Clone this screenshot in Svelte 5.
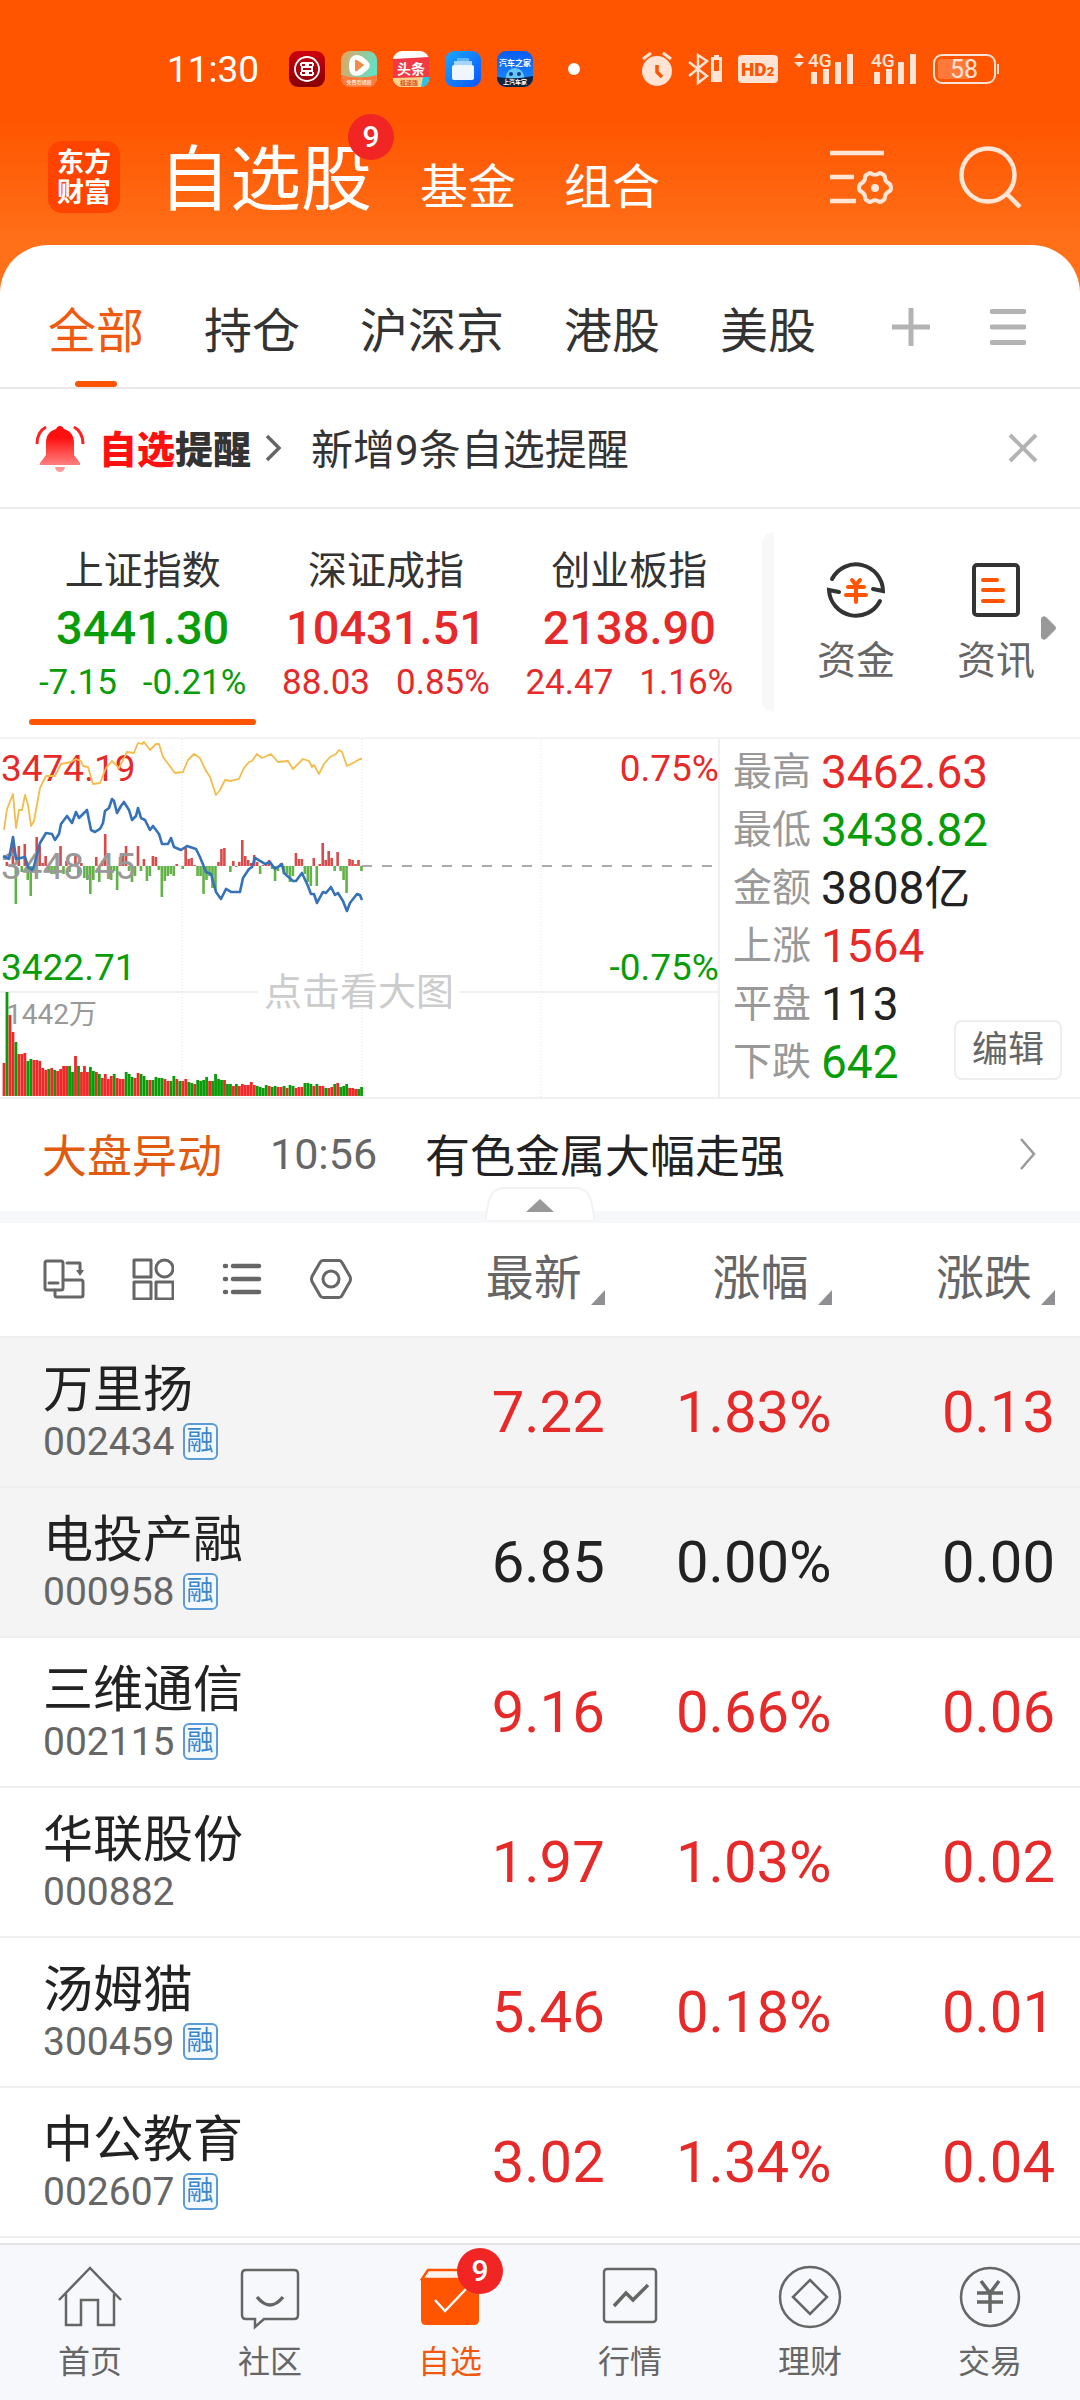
<script>
	let activeTab = $state('全部');
	let activeIndex = $state(0);
	let showAlert = $state(true);
	let showMarket = $state(true);

	const tabs = ['全部', '持仓', '沪深京', '港股', '美股'];

	const indexes = [
		{ name: '上证指数', value: '3441.30', diff: '-7.15', pct: '-0.21%', dir: 'down' },
		{ name: '深证成指', value: '10431.51', diff: '88.03', pct: '0.85%', dir: 'up' },
		{ name: '创业板指', value: '2138.90', diff: '24.47', pct: '1.16%', dir: 'up' }
	];

	const stats = [
		{ label: '最高', value: '3462.63', dir: 'up' },
		{ label: '最低', value: '3438.82', dir: 'down' },
		{ label: '金额', value: '3808亿', dir: 'flat' },
		{ label: '上涨', value: '1564', dir: 'up' },
		{ label: '平盘', value: '113', dir: 'flat' },
		{ label: '下跌', value: '642', dir: 'down' }
	];

	const stocks = [
		{ name: '万里扬', code: '002434', margin: true, price: '7.22', pct: '1.83%', diff: '0.13', dir: 'up', top: true },
		{ name: '电投产融', code: '000958', margin: true, price: '6.85', pct: '0.00%', diff: '0.00', dir: 'flat', top: true },
		{ name: '三维通信', code: '002115', margin: true, price: '9.16', pct: '0.66%', diff: '0.06', dir: 'up' },
		{ name: '华联股份', code: '000882', margin: false, price: '1.97', pct: '1.03%', diff: '0.02', dir: 'up' },
		{ name: '汤姆猫', code: '300459', margin: true, price: '5.46', pct: '0.18%', diff: '0.01', dir: 'up' },
		{ name: '中公教育', code: '002607', margin: true, price: '3.02', pct: '1.34%', diff: '0.04', dir: 'up' }
	];

	const columns = ['最新', '涨幅', '涨跌'];

	// one entry per minute, negative = green
	const volume = [
		33, -104, 81, 64, -54, 42, 42, 43, -35, -37, 36, 36, 35, 28, 26, -27, 28, -26, 25, 27, 30, 30, -30, -24, 40,
		-30, 24, 30, 24, -29, -25, 24, -22, 18, 22, 17, 20, -22, 18, 17, 17, -24, -22, -19, 18, 23, -22, -20, -16, 16,
		-16, -19, -18, -18, 17, 15, -15, -20, 17, -15, 15, 17, -14, -13, 12, -16, -15, -16, -19, 15, -15, -22, -17,
		-16, 16, -12, -12, 10, -12, 10, 12, 11, 11, 14, 11, -10, -9, -8, -11, 10, -9, -10, 9, 9, -10, 8, -11, -10, 8,
		9, 9, -13, -13, -12, 10, -12, 10, 10, -8, 8, 9, -12, 13, -9, -10, -12, 8, 8, 7, -7, -9
	];
	const momentum = [
		0, 4, 0, 20, -38, 20, -6, 22, -14, -30, -5, 29, 20, 3, 10, -4, -8, -8, -6, 20, -8, 5, -6, 2, 11, -10, 3, -12,
		-14, -28, -14, 9, -16, 5, 32, -6, -14, -5, -24, 9, 10, 20, -5, -16, -10, 20, -5, 7, -15, -10, 10, 9, -4, -31,
		-15, -10, -8, -10, 2, 0, -3, 19, 7, 8, 1, -10, -10, -28, -14, -10, -22, -24, 4, 17, 18, 0, -6, 5, -1, 4, 26,
		10, 6, 3, 11, 4, -8, 1, 2, 6, -3, -15, -5, 3, -8, -8, -16, -10, 13, 7, 7, -8, -16, -20, 8, -20, 2, 23, 6, 15,
		8, -5, 14, -5, -14, -27, 7, 6, 2, 6, -5
	];
	const leadLine =
		'4,91 7,70 13,55 16,89 19,71 22,71 25,56 28,66 31,87 34,82 40,49 46,37 55,37 61,25 71,23 76,20 81,22 83,27 88,28 93,45 100,44 106,29 112,22 119,29 127,13 134,14 138,4 142,5 144,3 150,11 156,5 159,5 163,18 169,26 175,34 183,33 188,21 194,15 200,19 205,30 210,38 216,56 220,51 225,41 231,42 239,40 244,29 249,23 252,22 257,15 262,19 271,15 278,23 288,22 293,30 303,20 309,22 312,28 314,26 319,35 324,25 330,18 336,15 339,11 342,13 347,27 353,24 360,20 362,20';
	const priceLine =
		'3,117 9,120 13,98 16,120 25,118 28,128 32,131 34,127 40,104 46,94 52,95 55,101 59,95 61,85 67,77 72,84 76,73 79,79 87,71 91,91 95,93 100,90 103,84 105,72 109,69 112,60 114,62 117,74 121,67 124,63 129,71 132,81 136,77 138,69 141,79 145,81 150,91 153,87 159,95 162,105 168,105 171,99 174,108 181,111 187,107 196,110 200,118 206,133 211,135 216,153 221,160 226,150 231,153 240,153 243,139 249,130 252,128 255,119 265,125 270,123 275,130 282,125 284,134 293,142 296,142 302,134 308,147 311,155 314,155 317,164 323,153 326,154 331,148 335,156 338,154 343,162 347,172 350,164 357,155 360,156 362,161';

	function barX(i) {
		return 2.6 + i * 2.98;
	}
</script>

{#snippet signal()}
	<text x="0" y="15" class="net">4G</text>
	<path d="M3 32V20h6v12zM15 32V17h6v15zM27 32V10h6v22zM39 32V2h6v30z" />
{/snippet}

<div class="page">
	<header>
		<div class="status">
			<time>11:30</time>
			<div class="apps">
				<svg viewBox="0 0 36 36">
					<defs>
						<linearGradient id="icbc" x2="0" y2="1"><stop stop-color="#cf0010" /><stop offset="1" stop-color="#850006" /></linearGradient>
						<linearGradient id="video" x2="1" y2="0.3"><stop stop-color="#e9a35c" /><stop offset="1" stop-color="#61e0c4" /></linearGradient>
						<linearGradient id="files" x2="1" y2="1"><stop stop-color="#1aa7ff" /><stop offset="1" stop-color="#0a55ff" /></linearGradient>
						<linearGradient id="car" x2="0" y2="1"><stop stop-color="#0a5cf0" /><stop offset="1" stop-color="#1b8fff" /></linearGradient>
					</defs>
					<rect width="36" height="36" rx="9" fill="url(#icbc)" />
					<circle cx="18" cy="18" r="12" fill="none" stroke="#fff" stroke-width="1.8" />
					<path d="M12 12h5v4h-4v4h4v4h-5M24 12h-5v4h4v4h-4v4h5M12 12v3M24 12v3M12 24v-3M24 24v-3" fill="none" stroke="#fff" stroke-width="2" />
				</svg>
				<svg viewBox="0 0 36 36">
					<rect width="36" height="36" rx="9" fill="url(#video)" />
					<path d="M0 24q18 5 36 0v3a9 9 0 0 1-9 9H9a9 9 0 0 1-9-9z" fill="#ff7a3c" />
					<path d="M13 4.500q4-1.500 8 1l5 4q5 5 1 9l-6 5q-4 2-8 1-5-1-5-10 0-8 5-10z" fill="#fff" />
					<path d="M14 10q0-2 2-1l6 4q2 1 0 2l-6 5q-2 1-2-1z" fill="#f08c4a" />
					<text x="18" y="33" class="tiny" font-size="5" fill="#ffe2c9">免费看短剧</text>
				</svg>
				<svg viewBox="0 0 36 36">
					<rect width="36" height="36" rx="9" fill="#fff" />
					<path d="M0 8l36-2v22H0z" fill="#f23a45" />
					<text x="18" y="23" class="tiny" font-size="14" fill="#fff">头条</text>
					<path d="M0 27l36-1v1a9 9 0 0 1-9 9H9a9 9 0 0 1-9-9z" fill="#fcd28c" />
					<text x="16" y="34" class="tiny" font-size="6" fill="#d5502c">极速版</text>
					<path d="M30 26h6v2a8 8 0 0 1-8 8z" fill="#27c4e8" />
				</svg>
				<svg viewBox="0 0 36 36">
					<rect width="36" height="36" rx="9" fill="url(#files)" />
					<path d="M12 7h12v3H12z" fill="#5fb6ff" />
					<path d="M9 10h18v4H9z" fill="#a5d4ff" />
					<rect x="7" y="14" width="22" height="15" rx="2" fill="#eff6ff" />
				</svg>
				<svg viewBox="0 0 36 36">
					<rect width="36" height="36" rx="9" fill="url(#car)" />
					<text x="18" y="15" class="tiny" font-size="8" fill="#fff">汽车之家</text>
					<circle cx="18" cy="26" r="9" fill="#67c7fb" />
					<circle cx="14" cy="23" r="2" fill="#0b3e8f" />
					<circle cx="22" cy="23" r="2" fill="#0b3e8f" />
					<path d="M0 26q18 3 36-1v2a9 9 0 0 1-9 9H9a9 9 0 0 1-9-9z" fill="#10233f" />
					<text x="18" y="33" class="tiny" font-size="6" fill="#fff">上汽车家</text>
				</svg>
			</div>
			<span class="more-dot"></span>
			<div class="system">
				<svg width="30" height="34" viewBox="0 0 30 34">
					<path d="M1 7l8-6M29 7l-8-6" stroke="#ffe4d6" stroke-width="3" />
					<circle cx="15" cy="19" r="15" />
					<path d="M15 13v7l5 5" fill="none" stroke="#ff5500" stroke-width="3.5" />
				</svg>
				<svg width="34" height="34" viewBox="0 0 34 34">
					<path d="M1 10l18 14-9 7V3l9 6L1 24" fill="none" stroke="#ffe4d6" stroke-width="2.4" />
					<path d="M26 3h5v2h3v25H23V5h3zM26 8v11h5V8z" fill-rule="evenodd" />
				</svg>
				<svg width="40" height="28" viewBox="0 0 40 28">
					<rect width="40" height="28" rx="4" />
					<text x="3" y="21" class="hd">HD<tspan font-size="13">2</tspan></text>
				</svg>
				<svg width="61" height="34" viewBox="0 0 61 34">
					<path d="M0 6l5-5 5 5zM0 10l5 5 5-5z" />
					<g transform="translate(14 0)">{@render signal()}</g>
				</svg>
				<svg width="46" height="34" viewBox="0 0 46 34">{@render signal()}</svg>
				<svg width="67" height="30" viewBox="0 0 67 30">
					<rect x="1" y="1" width="61" height="28" rx="8" fill="none" stroke="#ffe4d6" stroke-width="2" />
					<path d="M8 5h28v20H8q-3 0-3-3V8q0-3 3-3z" fill="#ff7a3a" />
					<path d="M64 10h2v10h-2z" />
					<text x="31" y="24" class="battery">58</text>
				</svg>
			</div>
		</div>

		<div class="topbar">
			<div class="logo">东方<br />财富</div>
			<nav class="sections">
				<a href="#watch" class="current">自选股<span class="badge">9</span></a>
				<a href="#fund">基金</a>
				<a href="#group">组合</a>
			</nav>
			<button class="manage" aria-label="管理">
				<svg width="64" height="58" viewBox="0 0 64 58" fill="none" stroke="#ffe6d6">
					<path d="M0 5h54M0 29h24M0 53h26" stroke-width="4.5" />
					<path d="M38 26q2-2 4 0 3 1.500 6 0 2-2 4 0 3 1 3 4 0 3 3 5 3 1 3 5 0 3-3 4-3 2-3 5 0 3-3 4-2 2-4 0-3-1.500-6 0-2 2-4 0-3-1-3-4 0-3-3-5-3-1-3-4 0-4 3-5 3-2 3-5 0-3 3-4z" stroke-width="4" />
					<circle cx="45" cy="40" r="4" fill="#ffe6d6" stroke="none" />
				</svg>
			</button>
			<button aria-label="搜索">
				<svg width="64" height="64" viewBox="0 0 64 64" fill="none" stroke="#ffe6d6" stroke-width="4.5">
					<circle cx="30" cy="30" r="26.5" />
					<path d="M48 48l14 14" />
				</svg>
			</button>
		</div>
	</header>

	<main>
		<nav class="tabs">
			{#each tabs as tab}
				<button class:active={activeTab === tab} onclick={() => (activeTab = tab)}>{tab}</button>
			{/each}
			<button class="tool add" aria-label="添加">
				<svg width="38" height="38" viewBox="0 0 38 38"><path d="M0 19h38M19 0v38" stroke="#b3b3b3" stroke-width="5" /></svg>
			</button>
			<button class="tool" aria-label="菜单">
				<svg width="36" height="38" viewBox="0 0 36 38"><path d="M2 3.500h32M2 19h32M2 34.500h32" stroke="#b3b3b3" stroke-width="5" stroke-linecap="round" /></svg>
			</button>
		</nav>

		{#if showAlert}
			<section class="alert">
				<svg width="50" height="48" viewBox="0 0 50 48">
					<defs><linearGradient id="bell" x2="0" y2="1"><stop offset="0.3" stop-color="#ff1010" /><stop offset="1" stop-color="#ff8080" /></linearGradient></defs>
					<path d="M25 2c2 0 3 1 4 3 7 2 10 7 10 14v12l6 8v2H5v-2l6-8V19c0-7 3-12 10-14 1-2 2-3 4-3z" fill="url(#bell)" />
					<path d="M20 43h10q-1 5-5 5t-5-5z" fill="#ff9a9a" />
					<path d="M11 3Q2 8 2 20M39 3q9 5 9 17" fill="none" stroke="#ff2020" stroke-width="3" />
				</svg>
				<strong><em>自选</em>提醒</strong>
				<svg width="16" height="28" viewBox="0 0 16 28"><path d="M2 2l12 12L2 26" fill="none" stroke="#666" stroke-width="3.500" /></svg>
				<span class="message">新增9条自选提醒</span>
				<button aria-label="关闭" onclick={() => (showAlert = false)}>
					<svg width="30" height="30" viewBox="0 0 30 30"><path d="M2 2l26 26M28 2L2 28" stroke="#b3b3b3" stroke-width="4" /></svg>
				</button>
			</section>
		{/if}

		<section class="indexes">
			<div class="index-list">
				{#each indexes as item, i}
					<button class="index" class:selected={activeIndex === i} onclick={() => (activeIndex = i)}>
						<span class="index-name">{item.name}</span>
						<span class="index-value {item.dir}">{item.value}</span>
						<span class="index-change {item.dir}"><span>{item.diff}</span><span>{item.pct}</span></span>
					</button>
				{/each}
			</div>
			<div class="shortcuts">
				<a href="#capital">
					<svg width="60" height="60" viewBox="0 0 60 60" fill="none" stroke="#333" stroke-width="4" stroke-linecap="round">
						<path d="M6 19A27 27 0 0 1 57 31l-10-2M54 41A27 27 0 0 1 3 30l10 2" />
						<path d="M26 20l4 5 4-5M22 27h16M20 35h20M30 26v16" stroke="#ff5500" />
					</svg>
					资金
				</a>
				<a href="#news">
					<svg width="60" height="60" viewBox="0 0 60 60" fill="none" stroke-width="4" stroke-linecap="round">
						<rect x="8" y="5" width="44" height="50" rx="3" stroke="#333" />
						<path d="M17 20h14M17 30h20M17 41h20" stroke="#ff5500" />
					</svg>
					资讯
				</a>
				<svg class="next" width="15" height="24" viewBox="0 0 15 24"><path d="M0 3q1-4 5-2l9 9q2 2 0 4l-9 9q-4 2-5-2z" fill="#999" /></svg>
			</div>
		</section>

		{#if showMarket}
			<section class="market">
				<svg class="chart" viewBox="0 0 720 358">
					<g stroke="#f0f0f0" stroke-width="2">
						<path d="M0 253h258M460 253h260M719 0v358" />
						<path d="M182 0v358M362 0v236M362 270v88M541 0v358" stroke-dasharray="1 2" />
					</g>
					<path d="M362 127h352" stroke="#909090" stroke-width="1.500" stroke-dasharray="10 10" />
					{#each momentum as m, i}
						<rect x={barX(i)} y={m > 0 ? 127 - m : 127} width="2.600" height={Math.abs(m)} fill={m > 0 ? '#d94a4a' : '#62b347'} />
					{/each}
					<text x="1" y="140" class="chart-text grey">3448.45</text>
					<text x="1" y="42" class="chart-text up">3474.19</text>
					<text x="1" y="241" class="chart-text down">3422.71</text>
					<text x="719" y="42" class="chart-text up end">0.75%</text>
					<text x="719" y="241" class="chart-text down end">-0.75%</text>
					<polyline points={leadLine} stroke="#f2bd4b" stroke-width="1.800" />
					<polyline points={priceLine} stroke="#3572b8" stroke-width="2.600" />
					{#each volume as v, i}
						<rect x={barX(i)} y={357 - Math.abs(v)} width="2.800" height={Math.abs(v)} fill={v > 0 ? '#f02828' : '#089c08'} />
					{/each}
					<text x="6" y="285" class="volume-text">1442万</text>
					<text x="359" y="266" class="watermark">点击看大图</text>
				</svg>
				<div class="stats">
					<dl>
						{#each stats as s}
							<div>
								<dt>{s.label}</dt>
								<dd class={s.dir}>{s.value}</dd>
							</div>
						{/each}
					</dl>
					<button class="edit">编辑</button>
				</div>
			</section>

			<a class="flash" href="#flash">
				<span class="flash-title">大盘异动</span>
				<time>10:56</time>
				<span class="flash-text">有色金属大幅走强</span>
				<svg width="18" height="34" viewBox="0 0 18 34"><path d="M2 2l13 15L2 32" fill="none" stroke="#999" stroke-width="2.500" /></svg>
			</a>
		{/if}

		<div class="divider">
			<button aria-label="收起" onclick={() => (showMarket = !showMarket)}>
				<svg width="112" height="34" viewBox="0 0 112 34">
					<path d="M1 34C4 24 2 1 20 1h72c18 0 16 23 19 33z" fill="#fff" stroke="#f2f2f4" stroke-width="2" />
					<path d="M42 25l14-13 14 13z" fill="#999" />
				</svg>
			</button>
		</div>

		<table>
			<colgroup>
				<col class="col-name" />
				<col class="col-price" />
				<col class="col-pct" />
				<col class="col-diff" />
			</colgroup>
			<thead>
				<tr>
					<th>
						<div class="views">
							<button aria-label="横屏">
								<svg viewBox="0 0 42 42">
									<rect x="2" y="3" width="18" height="29" rx="2" />
									<path d="M6 25h9M12 32v5q0 2 2 2h24q2 0 2-2V24q0-2-2-2H21M24 5h13v9" />
									<path d="M33 12h8l-4 6z" fill="#666" stroke="none" />
								</svg>
							</button>
							<button aria-label="宫格">
								<svg viewBox="0 0 42 42">
									<path d="M2 2h17v17H2zM2 24h17v17H2zM24 24h17v17H24z" />
									<circle cx="32.500" cy="10.500" r="8.500" />
								</svg>
							</button>
							<button aria-label="列表">
								<svg viewBox="0 0 42 42"><path d="M12 8h26M12 21h26M12 34h26M4 8h1M4 21h1M4 34h1" stroke-width="4.500" /></svg>
							</button>
							<button aria-label="设置">
								<svg viewBox="0 0 42 42">
									<path d="M13 2.500h16q2 0 3 2l8 14q1 2.500 0 5l-8 14q-1 2-3 2H13q-2 0-3-2l-8-14q-1-2.500 0-5l8-14q1-2 3-2z" />
									<circle cx="21" cy="21" r="8" />
								</svg>
							</button>
						</div>
					</th>
					{#each columns as column}
						<th><button class="sort">{column}<svg width="14" height="15" viewBox="0 0 14 15"><path d="M14 0v15H0z" fill="#909094" /></svg></button></th>
					{/each}
				</tr>
			</thead>
			<tbody>
				{#each stocks as stock}
					<tr class:pinned={stock.top}>
						<td>
							<div class="name">{stock.name}</div>
							<div class="code">{stock.code}{#if stock.margin}<span class="tag">融</span>{/if}</div>
						</td>
						<td class={stock.dir}>{stock.price}</td>
						<td class={stock.dir}>{stock.pct}</td>
						<td class={stock.dir}>{stock.diff}</td>
					</tr>
				{/each}
			</tbody>
		</table>
	</main>

	<nav class="bottom">
		<a href="#home">
			<svg viewBox="0 0 66 66"><path d="M2 36L33 4l31 32M9 30v31h15V36h17v25h16V30" /></svg>
			首页
		</a>
		<a href="#community">
			<svg viewBox="0 0 66 66">
				<path d="M9 6h48q4 0 4 4v41q0 4-4 4H27l-9 8v-8H9q-4 0-4-4V10q0-4 4-4z" />
				<path d="M20 33q13 16 26 0" stroke-width="3.500" />
			</svg>
			社区
		</a>
		<a href="#watch" class="current">
			<svg viewBox="0 0 66 66">
				<path d="M11 6h44l6 9H5z" fill="#fff3ec" stroke="#ff5500" />
				<path d="M4 15h58v41q0 5-5 5H9q-5 0-5-5z" fill="#ff5500" stroke="none" />
				<path d="M18 36l10 11 21-22" stroke="#fff" />
			</svg>
			<span class="badge">9</span>
			自选
		</a>
		<a href="#quotes">
			<svg viewBox="0 0 66 66">
				<rect x="7" y="5" width="52" height="53" rx="3" />
				<path d="M17 42l12-13 7 7 15-15" stroke-width="3.500" />
			</svg>
			行情
		</a>
		<a href="#wealth">
			<svg viewBox="0 0 66 66">
				<circle cx="33" cy="33" r="30" />
				<path d="M33 16l17 17-17 17-17-17z" />
			</svg>
			理财
		</a>
		<a href="#trade">
			<svg viewBox="0 0 66 66">
				<circle cx="33" cy="33" r="29" />
				<path d="M24 17l9 12 9-12M20 29h26M20 38h26M33 29v20" stroke-width="3.500" />
			</svg>
			交易
		</a>
	</nav>
</div>

<style>
	:global(body) {
		margin: 0;
		background: #fff;
	}

	.page {
		display: flex;
		flex-direction: column;
		min-height: 100vh;
		font-family: Roboto, 'Noto Sans CJK SC', sans-serif;
		font-weight: 400;
		color: #333;
	}

	button {
		padding: 0;
		border: none;
		background: none;
		font: inherit;
		color: inherit;
		cursor: pointer;
	}

	a {
		color: inherit;
		text-decoration: none;
	}

	svg {
		display: block;
		flex: none;
	}

	.up {
		color: #e62a2a;
		fill: #e62a2a;
	}

	.down {
		color: #089c08;
		fill: #089c08;
	}

	.flat {
		color: #222;
	}

	header {
		padding: 0 58px 48px 48px;
		background: linear-gradient(#ff5500 120px, #ff7019 245px);
	}

	.status {
		display: flex;
		align-items: center;
		height: 138px;
		padding: 0 22px 0 119px;
		color: #fff;
	}

	.status time {
		width: 122px;
		font-size: 37px;
	}

	.apps {
		display: flex;
		gap: 16px;
	}

	.apps svg {
		width: 36px;
		height: 36px;
	}

	.tiny {
		font-weight: 700;
		text-anchor: middle;
	}

	.more-dot {
		width: 12px;
		height: 12px;
		margin-left: 35px;
		border-radius: 50%;
		background: #fff;
	}

	.system {
		display: flex;
		align-items: center;
		gap: 16px;
		margin-left: auto;
		fill: #ffe4d6;
	}

	.system svg {
		overflow: visible;
	}

	.net {
		font-size: 19px;
		font-weight: 500;
	}

	.hd {
		font-size: 19px;
		font-weight: 900;
		fill: #ff5500;
	}

	.battery {
		font-size: 25px;
		text-anchor: middle;
	}

	.topbar {
		display: flex;
		align-items: center;
		height: 107px;
	}

	.logo {
		width: 72px;
		box-sizing: border-box;
		padding: 7px 0 5px;
		border-radius: 14px;
		background: #ff4400;
		color: #fff;
		font-size: 27px;
		line-height: 30px;
		font-weight: 700;
		text-align: center;
		margin-bottom: 30px;
	}

	.sections {
		display: flex;
		align-items: baseline;
		gap: 48px;
		margin: 0 auto 16px 39px;
		color: #fff;
		font-size: 48px;
		line-height: 80px;
	}

	.sections .current {
		position: relative;
		font-size: 71px;
	}

	.badge {
		position: absolute;
		width: 46px;
		height: 46px;
		border-radius: 50%;
		background: #f22525;
		color: #fff;
		font-size: 30px;
		line-height: 46px;
		font-weight: 500;
		text-align: center;
	}

	.sections .badge {
		top: -26px;
		right: -22px;
	}

	.topbar button {
		margin-bottom: 30px;
	}

	.topbar .manage {
		margin-right: 64px;
	}

	main {
		margin-top: -48px;
		border-radius: 48px 48px 0 0;
		background: #fff;
	}

	.tabs {
		display: flex;
		gap: 60px;
		align-items: stretch;
		box-sizing: border-box;
		height: 144px;
		padding: 0 54px 0 48px;
		border-bottom: 2px solid #e8e8e8;
		font-size: 48px;
	}

	.tabs button {
		position: relative;
		padding-top: 22px;
	}

	.tabs .active {
		color: #f05a10;
	}

	.tabs .active::after {
		content: '';
		position: absolute;
		bottom: 0;
		left: 50%;
		width: 42px;
		height: 6px;
		margin-left: -21px;
		border-radius: 3px;
		background: #ff5500;
	}

	.tabs .add {
		margin-left: auto;
	}

	.alert {
		display: flex;
		align-items: center;
		height: 118px;
		padding: 0 42px 0 35px;
		border-bottom: 2px solid #ececec;
	}

	.alert strong {
		margin: 0 14px 4px;
		font-size: 38px;
		font-weight: 900;
	}

	.alert em {
		color: #ff1010;
		font-style: normal;
	}

	.alert .message {
		margin: 0 auto 4px 30px;
		font-size: 42px;
	}

	.indexes {
		display: grid;
		grid-template-columns: 762fr 318fr;
		height: 228px;
		border-bottom: 2px solid #f3f3f5;
	}

	.index-list {
		display: grid;
		grid-template-columns: repeat(3, 1fr);
		padding: 0 11px 0 21px;
	}

	.index {
		position: relative;
		display: flex;
		flex-direction: column;
		align-items: center;
		padding-top: 36px;
	}

	.index-name {
		font-size: 39px;
		line-height: 52px;
	}

	.index-value {
		font-size: 47px;
		line-height: 62px;
		font-weight: 500;
	}

	.index-change {
		display: flex;
		gap: 26px;
		font-size: 35px;
		line-height: 48px;
	}

	.selected::after {
		content: '';
		position: absolute;
		right: 8px;
		bottom: 12px;
		left: 8px;
		height: 6px;
		border-radius: 3px;
		background: #ff5500;
	}

	.shortcuts {
		position: relative;
		display: flex;
		gap: 62px;
		margin: 23px 0 25px;
		padding: 28px 0 0 43px;
		border-left: 12px solid #f7f8fa;
		border-radius: 12px 0 0 12px;
		font-size: 39px;
		line-height: 52px;
		color: #666;
		box-sizing: border-box;
	}

	.shortcuts a {
		display: flex;
		flex-direction: column;
		align-items: center;
		gap: 15px;
	}

	.next {
		position: absolute;
		top: 84px;
		right: 24px;
	}

	.market {
		display: flex;
		border-bottom: 2px solid #f0f0f0;
	}

	.chart {
		width: 66.66%;
		height: auto;
	}

	.chart polyline {
		fill: none;
		stroke-linejoin: round;
	}

	.chart-text {
		font-size: 37px;
	}

	.end {
		text-anchor: end;
	}

	.grey {
		fill: #999;
	}

	.volume-text {
		font-size: 28px;
		fill: #999;
	}

	.watermark {
		font-size: 38px;
		fill: #ccc;
		text-anchor: middle;
	}

	.stats {
		position: relative;
		flex: 1;
		padding: 4px 0 0 13px;
	}

	dl {
		margin: 0;
	}

	dl div {
		display: flex;
		align-items: center;
		gap: 10px;
		line-height: 58px;
	}

	dt {
		font-size: 39px;
		color: #999;
	}

	dd {
		margin: 0;
		font-size: 46px;
	}

	.edit {
		position: absolute;
		right: 18px;
		bottom: 17px;
		width: 108px;
		height: 60px;
		border: 2px solid #eee;
		border-radius: 8px;
		font-size: 36px;
		line-height: 54px;
		color: #666;
		background: #fff;
	}

	.flash {
		display: flex;
		align-items: center;
		box-sizing: border-box;
		height: 112px;
		padding: 0 43px 2px 42px;
		font-size: 45px;
	}

	.flash-title {
		color: #e05a10;
	}

	.flash time {
		margin: 0 48px;
		font-size: 43px;
		color: #666;
	}

	.flash-text {
		margin-right: auto;
		color: #222;
	}

	.divider {
		position: relative;
		height: 12px;
		background: #f7f8fa;
	}

	.divider button {
		position: absolute;
		bottom: 2px;
		left: 50%;
		margin-left: -56px;
	}

	table {
		width: 100%;
		table-layout: fixed;
		border-collapse: collapse;
	}

	.col-name {
		width: 37%;
	}

	.col-price {
		width: 19%;
	}

	.col-pct {
		width: 21%;
	}

	.col-diff {
		width: 23%;
	}

	th,
	td {
		box-sizing: border-box;
		padding: 0;
		text-align: right;
		border-bottom: 2px solid #efefef;
	}

	th:first-child,
	td:first-child {
		padding-left: 43px;
		text-align: left;
	}

	th:last-child,
	td:last-child {
		padding-right: 25px;
	}

	th {
		height: 114px;
		font-weight: 400;
	}

	.views {
		display: flex;
		gap: 47px;
	}

	.views svg {
		width: 42px;
		height: 42px;
		fill: none;
		stroke: #666;
		stroke-width: 3;
		stroke-linecap: round;
		stroke-linejoin: round;
	}

	.sort {
		display: inline-flex;
		align-items: flex-end;
		gap: 9px;
		font-size: 48px;
		line-height: 60px;
		color: #666;
	}

	.sort svg {
		margin-bottom: 4px;
	}

	td {
		height: 150px;
		font-size: 58px;
	}

	.pinned {
		background: #f4f4f4;
	}

	.name {
		font-size: 50px;
		line-height: 60px;
		color: #222;
	}

	.code {
		display: flex;
		align-items: center;
		gap: 8px;
		font-size: 39px;
		line-height: 44px;
		color: #666;
	}

	.tag {
		border: 2px solid #5b9bd8;
		border-radius: 6px;
		padding: 0 2px;
		font-size: 27px;
		line-height: 33px;
		color: #3a85cf;
		background: #f3f9ff;
	}

	.bottom {
		display: grid;
		grid-template-columns: repeat(6, 1fr);
		box-sizing: border-box;
		height: 157px;
		margin-top: auto;
		padding-top: 19px;
		border-top: 2px solid #e4e4e6;
		background: #f7f8fb;
		font-size: 32px;
		line-height: 44px;
		color: #666;
	}

	.bottom a {
		position: relative;
		display: flex;
		flex-direction: column;
		align-items: center;
		gap: 10px;
	}

	.bottom svg {
		width: 66px;
		height: 66px;
		fill: none;
		stroke: #666;
		stroke-width: 2.5;
	}

	.bottom .current {
		color: #f05a10;
	}

	.bottom .badge {
		top: -16px;
		left: 50%;
		margin-left: 7px;
	}
</style>
